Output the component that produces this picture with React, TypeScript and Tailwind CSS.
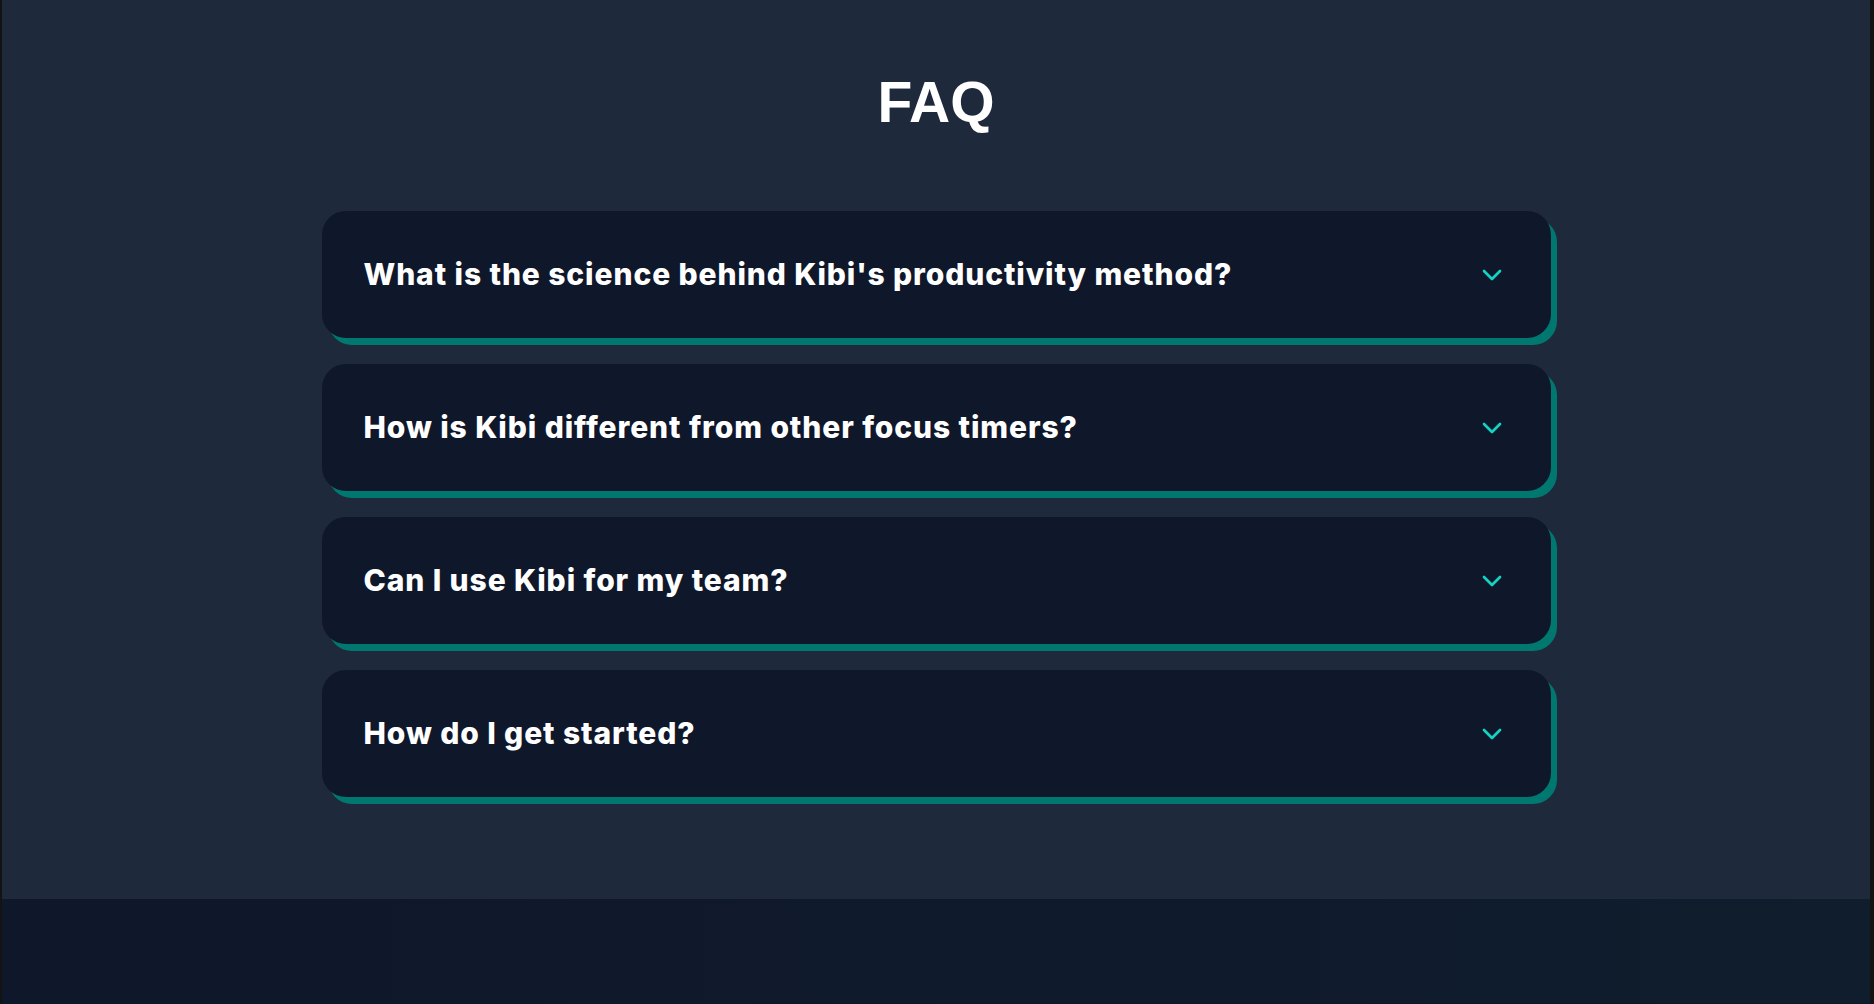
import React, { useState } from 'react'
import { ChevronDown } from 'lucide-react'

const faqs = [
  {
    q: "What is the science behind Kibi's productivity method?",
    a: 'Kibi builds on time-boxing and focused work intervals, paired with short breaks that help you keep your energy through the day.',
  },
  {
    q: 'How is Kibi different from other focus timers?',
    a: 'Kibi adapts to the way you work, tracks your sessions and gives you gentle nudges instead of rigid rules.',
  },
  {
    q: 'Can I use Kibi for my team?',
    a: 'Yes. Invite your teammates, share focus sessions and see how the whole team spends its time.',
  },
  {
    q: 'How do I get started?',
    a: 'Create a free account, set your first focus block and press start.',
  },
]

const FaqItem = ({ q, a }: { q: string; a: string }) => {
  const [open, setOpen] = useState(false)
  return (
    <div className="bg-slate-900 rounded-3xl shadow-[6px_7px_0_0_#00786f]">
      <button
        onClick={() => setOpen(!open)}
        className="w-full h-[127px] flex items-center justify-between pl-[42px] pr-[43px] text-left cursor-pointer"
      >
        <span className="text-white font-extrabold text-[30px] tracking-[0.03em] font-['Inter',sans-serif]">{q}</span>
        <ChevronDown size={32} className="text-[#14d3c0] shrink-0" />
      </button>
      {open && <p className="px-[42px] pb-8 -mt-4 text-slate-300 text-lg font-['Inter',sans-serif]">{a}</p>}
    </div>
  )
}

const App = () => {
  return (
    <div className="min-h-screen border-l-2 border-r-4 border-[#131313] bg-slate-900">
      <section className="bg-[#1e293b] pt-[74px] pb-[102px]">
        <h2 className="text-center text-white font-bold text-[57px] leading-none font-['Liberation_Sans',Arial,sans-serif] mb-20">
          FAQ
        </h2>
        <div className="w-[1229px] mx-auto flex flex-col gap-[26px]">
          {faqs.map((f, i) => (
            <FaqItem key={i} q={f.q} a={f.a} />
          ))}
        </div>
      </section>
      <footer className="h-[104px] bg-gradient-to-r from-[#0f172a] to-[#0f1d2d]"></footer>
    </div>
  )
}

export default App
